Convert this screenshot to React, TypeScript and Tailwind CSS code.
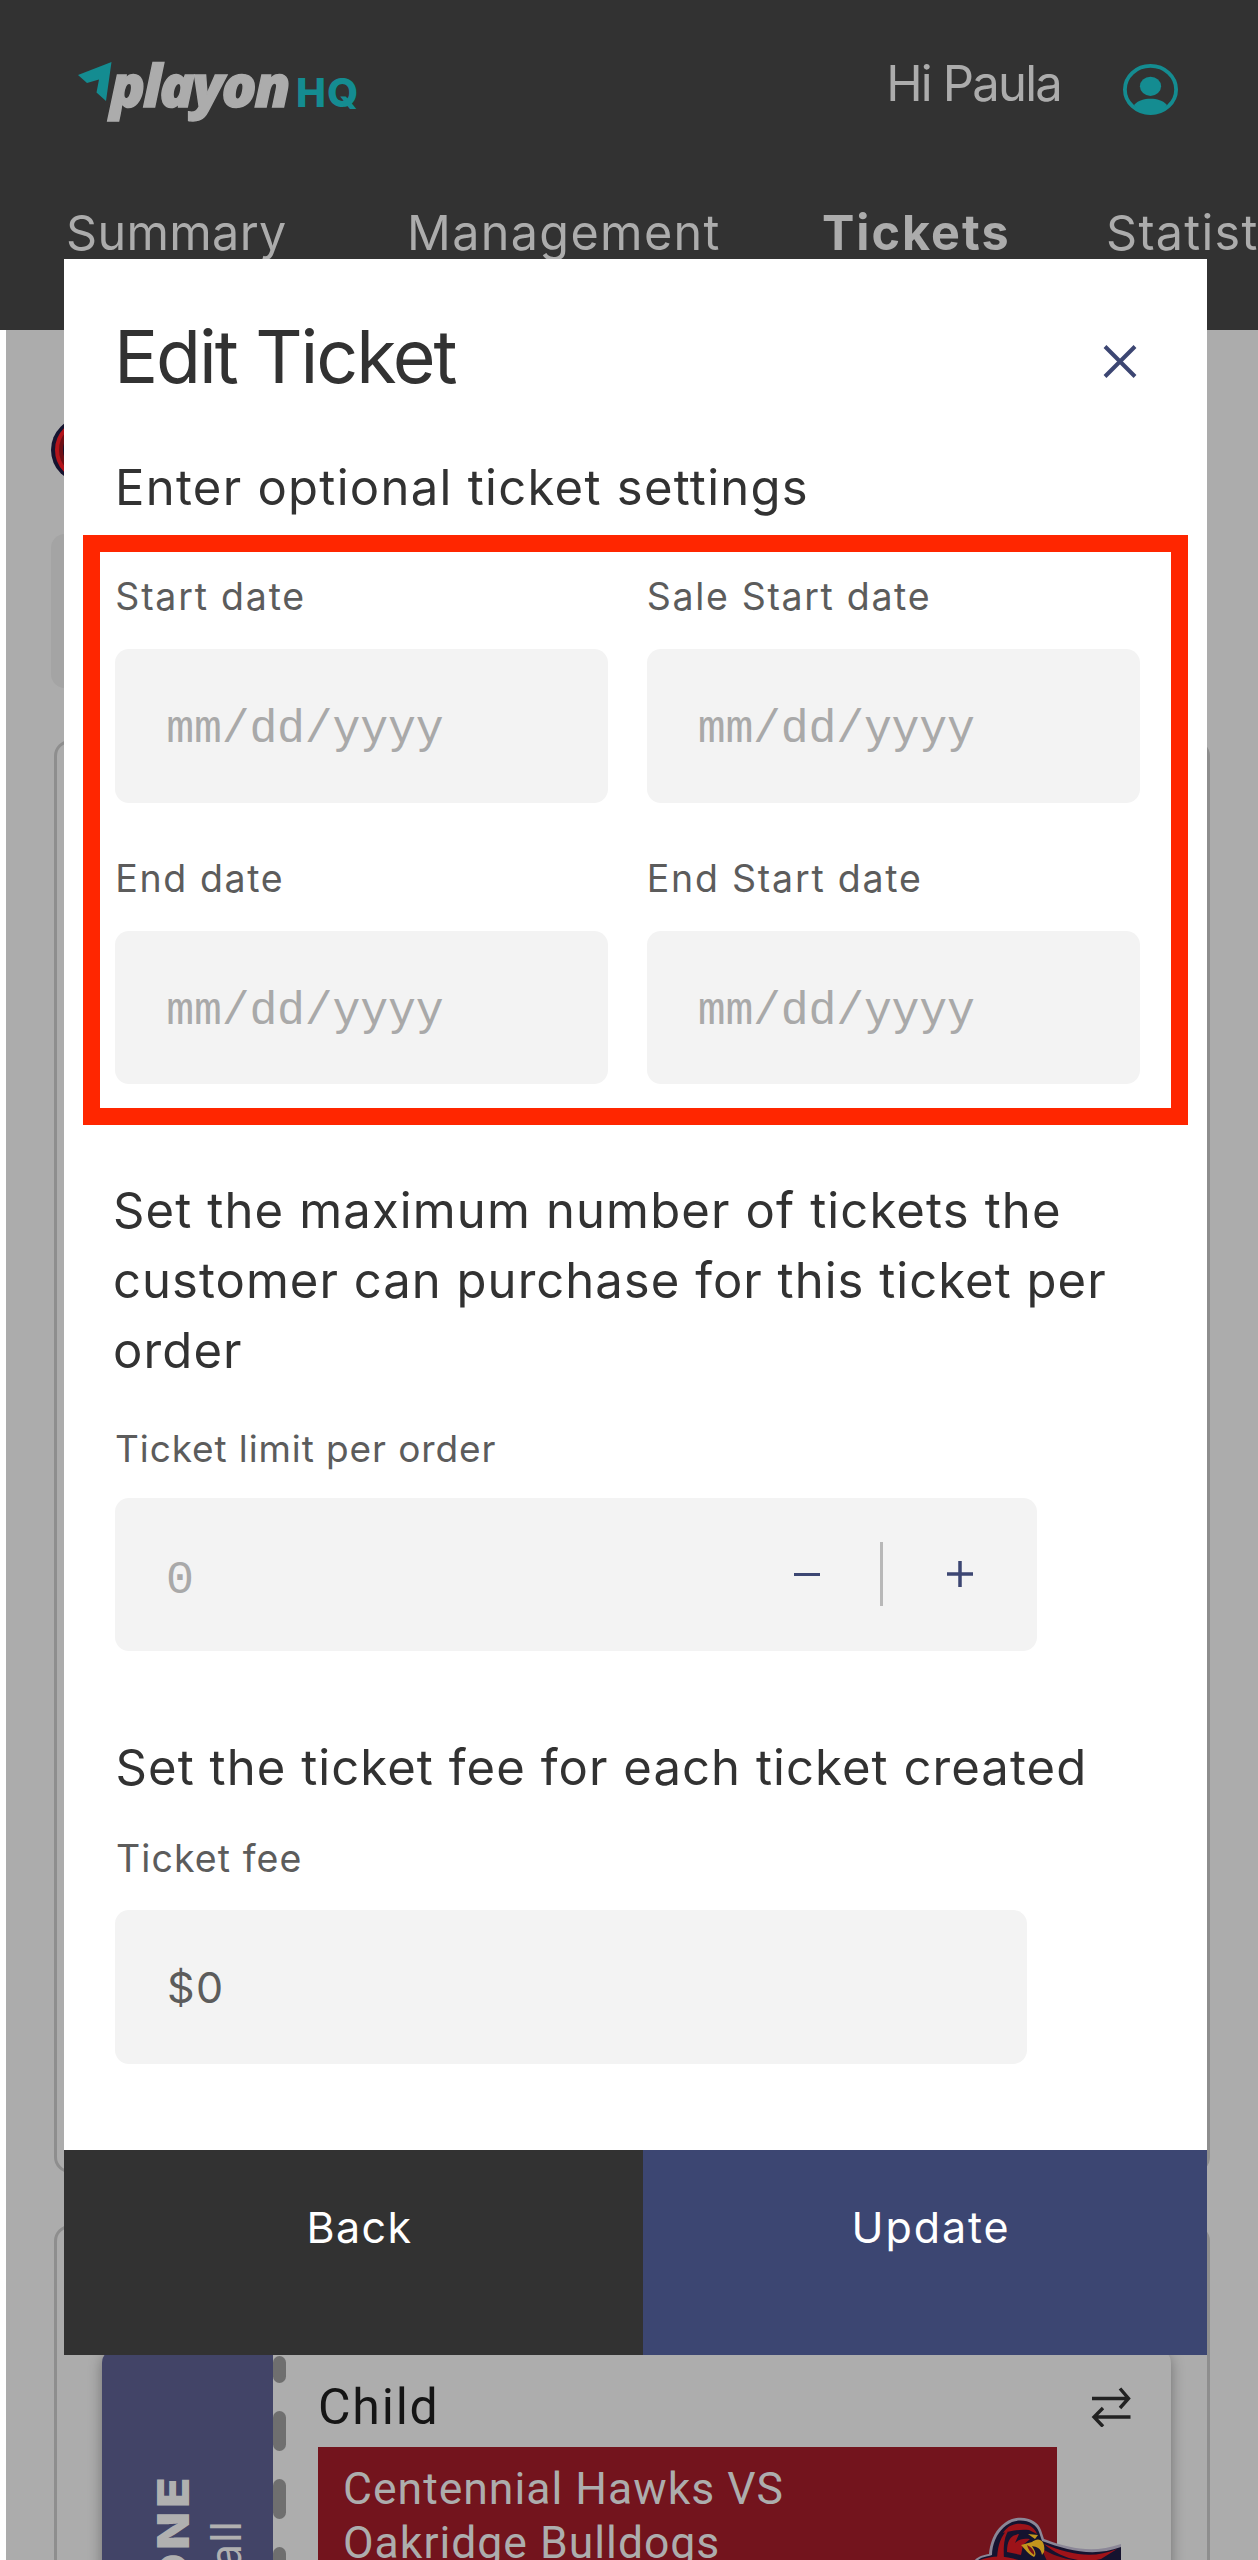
import React from "react";

const LABEL = "text-[37.5px] leading-[50px] text-[#5c5c5c]";
const FIELD = "flex h-[153.4px] items-center rounded-[14px] bg-[#f3f3f3] pl-[51px]";
const MONO = "font-['Liberation_Mono',monospace] text-[46.5px] tracking-[-0.2px] text-[#a9a9a9]";

function Logo() {
  return (
    <svg className="h-[72px] w-[290px]" viewBox="0 0 290 72">
      <path d="M2 17 L35.5 4 L30 43 L20.5 34.5 L23 21.5 L11 25 Z" fill="#148c91" />
      <text
        x="34"
        y="49"
        className="fill-[#acacac] stroke-[#acacac] font-['Open_Sans',sans-serif] text-[58px] font-extrabold italic tracking-[-2.3px] [stroke-width:1.4]"
      >
        playon
      </text>
      <text x="220" y="49" className="fill-[#148c91] font-['Inter',sans-serif] text-[40px] font-extrabold tracking-[1px]">
        HQ
      </text>
    </svg>
  );
}

function Avatar() {
  return (
    <svg className="h-[51px] w-[55px]" viewBox="0 0 55 51">
      <ellipse cx="27.5" cy="25.5" rx="25.6" ry="23.6" fill="none" stroke="#148c91" strokeWidth="3.8" />
      <ellipse cx="27.5" cy="22.3" rx="10.6" ry="9.6" fill="#148c91" />
      <path d="M11 41 C15 36.500 21 34.800 27.500 34.800 C34 34.800 40 36.500 44 41 C39 47.500 34 50.500 27.500 50.500 C21 50.500 16 47.500 11 41Z" fill="#148c91" />
    </svg>
  );
}

function TeamBadge() {
  return (
    <svg className="ml-[45px] h-[66px] w-[66px]" viewBox="0 0 66 66">
      <ellipse cx="33" cy="33" rx="33" ry="33" fill="#15132f" />
      <ellipse cx="33" cy="33" rx="27" ry="28" fill="#6f1016" stroke="#b3141b" strokeWidth="4" />
      <ellipse cx="34" cy="33" rx="22" ry="22" fill="#15132f" />
    </svg>
  );
}

function Hawk() {
  return (
    <svg className="h-[44px] w-[148px]" viewBox="0 0 148 44">
      <path d="M0 44 C4 39 10 38 15 37 C16 22 24 7 38 2 C52 -2 64 4 67 13 L70 22 C95 31 118 37 147 27 V44Z" fill="#8b8797" />
      <path d="M3 44 C8 39 14 40 18 38 C18 25 25 11 38 5 C50 1 62 6 65 15 L68 24 C95 34 120 40 147 30 V44Z" fill="#15132f" />
      <path d="M23 41 C24 27 27 17 37 10 C31 17 29 25 30 42 Z M33 35 C33 23 37 18 45 17 L41 26 C45 22 50 21 56 22 L49 28 L47 38 Z M29 16 C34 8 42 6 48 7 C55 7 61 11 63 17 L55 13 C45 12 37 14 29 16Z" fill="#9d1319" />
      <path d="M6 43 Q24 36 44 43Z" fill="#9d1319" />
      <path d="M70 27 C96 38 120 42 143 32 L127 42 C108 47 86 41 70 27Z" fill="#a01319" />
      <path d="M67 31 C82 41 100 44 111 44 H73 Z" fill="#8a1118" />
      <path d="M54 17 L64 18 L61 22 Z" fill="#c2961d" />
      <path d="M58 25 C65 19 72 24 70 35 L68 38 C67 31 63 30 58 29 C61 34 63 37 60 40 C54 37 51 32 47 28 Z" fill="#c2961d" />
      <path d="M53 28 C58 30 61 35 60 38 C56 35 54 32 53 28Z" fill="#771018" />
    </svg>
  );
}

function DateField({ label, tracking }: { label: string; tracking: string }) {
  return (
    <div>
      <div className={`${LABEL} ${tracking}`}>{label}</div>
      <div className={`${FIELD} mt-[27px]`}>
        <span className={`${MONO} pt-2`}>mm/dd/yyyy</span>
      </div>
    </div>
  );
}

function Header() {
  return (
    <header className="h-[330px] overflow-hidden bg-[#323232] text-[#acacac]">
      <div className="flex h-[203px] items-start pl-[76px] pr-[80px]">
        <div className="mt-[58px]">
          <Logo />
        </div>
        <span className="ml-auto mr-[62px] mt-[54px] text-[49px] leading-[60px] tracking-[-1.8px]">Hi Paula</span>
        <div className="mt-[64px]">
          <Avatar />
        </div>
      </div>
      <nav className="grid grid-cols-[341px_415px_284px_300px] pl-[66px] text-[48.5px] leading-[60px]">
        <span className="tracking-[0.33px]">Summary</span>
        <span className="tracking-[1.36px]">Management</span>
        <span className="font-bold tracking-[2px]">Tickets</span>
        <span className="tracking-[1.3px]">Statistics</span>
      </nav>
    </header>
  );
}

function TicketCard() {
  return (
    <div className="ml-[45px] mt-[121px] flex h-[400px] w-[1069px] overflow-hidden rounded-[14px] bg-[#adadad] shadow-[0_4px_14px_rgba(0,0,0,0.35)]">
      <div className="flex w-[171px] items-start bg-[#424467] pl-[44px] text-[#b0b0b0]">
        <span className="mt-[131px] rotate-180 scale-y-[1.12] text-[44px] font-black leading-[54px] tracking-[3.500px] [writing-mode:vertical-rl]">ONE</span>
        <span className="mt-[171px] rotate-180 text-[43px] leading-[50px] tracking-[1px] [writing-mode:vertical-rl]">all</span>
      </div>
      <div className="flex w-[13px] flex-col gap-7 pt-[7px]">
        <div className="h-[27px] shrink-0 rounded-full bg-[#6f6f6f]" />
        <div className="h-10 shrink-0 rounded-full bg-[#6f6f6f]" />
        <div className="h-10 shrink-0 rounded-full bg-[#6f6f6f]" />
        <div className="h-10 shrink-0 rounded-full bg-[#6f6f6f]" />
      </div>
      <div className="ml-[32px] flex-1">
        <div className="flex h-[98px] items-start justify-between pr-[40px]">
          <span className="mt-[28px] font-['Roboto',sans-serif] text-[50px] leading-[60px] tracking-[1.8px] text-[#151515]">Child</span>
          <svg className="mt-[38px] h-[40px] w-[40px]" viewBox="0 0 40 40" fill="none" stroke="#222" strokeWidth="3.4">
            <path d="M1 11.500H37M29 1.500L37.500 11.500L29 21M39.500 30H3M12 21L3 30L12 39.500" />
          </svg>
        </div>
        <div className="relative h-[300px] w-[739px] bg-[#73141d] pl-[25px] pt-[16px] font-['Roboto',sans-serif] text-[44.500px] leading-[53.5px] tracking-[1px] text-[#adadad]">
          <div>Centennial Hawks VS</div>
          <div>Oakridge Bulldogs</div>
          <div className="absolute left-[656px] top-[70px]">
            <Hawk />
          </div>
        </div>
      </div>
    </div>
  );
}

function Modal() {
  return (
    <div className="absolute left-[64px] top-[259px] flex h-[2096px] w-[1143px] flex-col bg-white text-[#323232]">
      <div className="mt-[53px] flex items-start justify-between pl-[50px] pr-[70px]">
        <h1 className="text-[73.5px] leading-[90px] tracking-[-2.1px]">Edit Ticket</h1>
        <svg className="mt-[33px] h-[33px] w-[34px]" viewBox="0 0 34 33" stroke="#3c4672" strokeWidth="4">
          <path d="M2 1.500L32 31.500M32 1.500L2 31.500" />
        </svg>
      </div>
      <h2 className="mt-[50.500px] pl-[51px] text-[49px] leading-[70px] tracking-[1.28px]">Enter optional ticket settings</h2>
      <div className="ml-[19.300px] mt-[12.800px] grid h-[590px] w-[1105px] grid-cols-[493px_493px] content-start gap-x-[38.400px] gap-y-[51.300px] border-[17px] border-[#ff2600] pl-[15px] pt-[20px]">
        <DateField label="Start date" tracking="tracking-[1.78px]" />
        <DateField label="Sale Start date" tracking="tracking-[1.67px]" />
        <DateField label="End date" tracking="tracking-[1.63px]" />
        <DateField label="End Start date" tracking="tracking-[1.78px]" />
      </div>
      <h2 className="mt-[50.500px] pl-[49px] text-[49px] leading-[70.300px] tracking-[1.13px]">
        Set the maximum number of tickets the
        <br />
        <span className="tracking-[1.03px]">customer can purchase for this ticket per</span>
        <br />
        order
      </h2>
      <div className="mt-[37px] pl-[51px]">
        <div className="text-[37px] leading-[50px] tracking-[0.9px] text-[#5c5c5c]">Ticket limit per order</div>
        <div className={`${FIELD} mt-[24px] w-[922px]`}>
          <span className={`${MONO} pt-[13px]`}>0</span>
          <div className="ml-auto mr-[64px] flex items-center">
            <div className="h-[3.500px] w-[26px] bg-[#3c4672]" />
            <div className="ml-[60px] h-[64px] w-[3px] bg-[#b8b8b8]" />
            <svg className="ml-[64px] h-[26px] w-[26px]" viewBox="0 0 26 26" stroke="#3c4672" strokeWidth="3.5">
              <path d="M0 13H26M13 0V26" />
            </svg>
          </div>
        </div>
      </div>
      <h2 className="mt-[81.500px] pl-[51.500px] text-[49px] leading-[70px] tracking-[1.07px]">Set the ticket fee for each ticket created</h2>
      <div className="mt-[31.500px] pl-[51px]">
        <div className={`${LABEL} pl-[1px] tracking-[1.08px]`}>Ticket fee</div>
        <div className={`${FIELD} mt-[26.300px] w-[912px]`}>
          <span className="pl-[1px] text-[43px] leading-[60px] tracking-[1.4px] text-[#5c5c5c]">$0</span>
        </div>
      </div>
      <div className="mt-auto flex h-[205px] text-[43px] leading-[60px] text-white">
        <div className="w-[579px] bg-[#323232] pl-[12px] pt-[47px] text-center tracking-[1.4px]">Back</div>
        <div className="flex-1 bg-[#3c4672] pl-[12px] pt-[47px] text-center tracking-[1.9px]">Update</div>
      </div>
    </div>
  );
}

export default function App() {
  return (
    <div className="relative h-[2560px] w-[1258px] overflow-hidden bg-white font-['Inter',sans-serif]">
      <Header />
      <main className="ml-[6px] h-[2230px] bg-[#acacac] pt-[87px]">
        <TeamBadge />
        <div className="ml-[45px] mt-[51px] h-[154px] w-[1100px] rounded-[14px] bg-[#a4a4a4]" />
        <div className="ml-[48px] mt-[52px] h-[1433px] w-[1156px] rounded-[16px] border-[3.500px] border-[#8e8e8e]" />
        <div className="ml-[48px] mt-[52px] h-[600px] w-[1156px] rounded-[16px] border-[3.500px] border-[#8e8e8e]">
          <TicketCard />
        </div>
      </main>
      <Modal />
    </div>
  );
}
